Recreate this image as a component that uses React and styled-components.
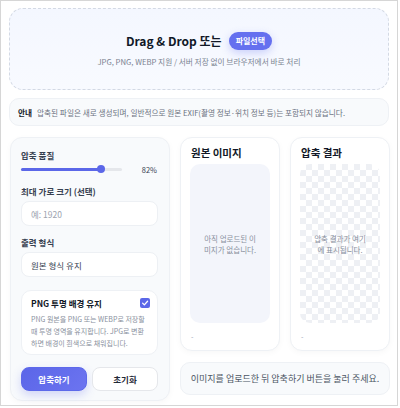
import styled, { createGlobalStyle } from "styled-components";

const GlobalStyle = createGlobalStyle`
  html, body {
    margin: 0;
    padding: 0;
    background: #ffffff;
  }
  * {
    box-sizing: border-box;
  }
  body {
    font-family: "Noto Sans CJK KR", "Noto Sans", sans-serif;
    color: #1f2937;
  }
`;

const Frame = styled.div`
  width: 398px;
  height: 406px;
  border: 1px solid #d6d6d6;
  padding: 7px 8px 0 8px;
  display: flex;
  flex-direction: column;
  gap: 8px;
  overflow: hidden;
`;

const DropZone = styled.div`
  height: 82px;
  border: 1.5px dashed #d3d9e4;
  border-radius: 14px;
  background: linear-gradient(180deg, #f4f7ff 0%, #f8faff 100%);
  display: flex;
  flex-direction: column;
  align-items: center;
  justify-content: center;
  gap: 7px;
`;

const DropTitle = styled.div`
  display: flex;
  align-items: center;
  gap: 7px;
  height: 18px;
  font-size: 12px;
  line-height: 18px;
  font-weight: 700;
  color: #111827;
`;

const PickButton = styled.span`
  background: #6570ef;
  color: #ffffff;
  font-size: 8px;
  font-weight: 700;
  height: 18px;
  padding: 0 7px;
  border-radius: 9px;
  display: inline-flex;
  align-items: center;
  box-shadow: 0 3px 8px rgba(101, 112, 239, 0.3);
`;

const DropSub = styled.div`
  font-size: 7.7px;
  line-height: 10px;
  color: #7a8291;
`;

const Notice = styled.div`
  height: 28px;
  border: 1px solid #eef1f5;
  background: #f8fafc;
  border-radius: 10px;
  display: flex;
  align-items: center;
  padding: 0 8px;
  font-size: 7.65px;
  color: #6b7280;
  gap: 5px;
  margin-bottom: 3px;
`;

const NoticeTag = styled.b`
  color: #111827;
  font-weight: 700;
`;

const Grid = styled.div`
  display: grid;
  grid-template-columns: 160px 100px 100px;
  grid-template-rows: 214px auto;
  column-gap: 10px;
  row-gap: 11px;
  padding-left: 1px;
`;

const ControlPanel = styled.div`
  grid-row: 1 / span 2;
  background: #f8fafc;
  border: 1px solid #eef1f5;
  border-radius: 12px;
  padding: 11px 11px 0 10px;
  display: flex;
  flex-direction: column;
  height: 264px;
  box-shadow: 0 2px 6px rgba(15, 23, 42, 0.03);
`;

const Label = styled.div`
  font-size: 8.5px;
  line-height: 12px;
  font-weight: 600;
  color: #374151;
  margin-top: ${(p) => p.$mt || 0}px;
`;

const SliderRow = styled.div`
  display: flex;
  align-items: center;
  justify-content: space-between;
  margin-top: 3px;
  height: 10px;
`;

const Track = styled.div`
  position: relative;
  width: 101px;
  height: 3px;
  border-radius: 2px;
  background: #e5e7eb;
`;

const Fill = styled.div`
  height: 100%;
  border-radius: 2px;
  background: #5b67e8;
`;

const Thumb = styled.div`
  position: absolute;
  top: 50%;
  width: 8px;
  height: 8px;
  border-radius: 50%;
  background: #5b67e8;
  transform: translate(-50%, -50%);
`;

const Percent = styled.span`
  font-size: 7.5px;
  color: #374151;
  padding-right: 1px;
`;

const Field = styled.div`
  margin-top: 4px;
  height: 25px;
  background: #ffffff;
  border: 1px solid #edf0f4;
  border-radius: 8px;
  display: flex;
  align-items: center;
  padding: 0 9px;
  font-size: 8.5px;
  color: ${(p) => (p.$placeholder ? "#9ca3af" : "#374151")};
`;

const PngBox = styled.div`
  margin-top: 13px;
  height: 65px;
  background: #ffffff;
  border: 1px solid #eef1f5;
  border-radius: 10px;
  padding: 6px 7px 0 9px;
`;

const PngHead = styled.div`
  display: flex;
  align-items: center;
  justify-content: space-between;
  height: 12px;
  font-size: 8.5px;
  font-weight: 700;
  color: #111827;
`;

const Check = styled.span`
  width: 10px;
  height: 10px;
  border-radius: 2px;
  background: #5b67e8;
  display: inline-flex;
  align-items: center;
  justify-content: center;
`;

const PngDesc = styled.div`
  margin-top: 4px;
  font-size: 7px;
  line-height: 12px;
  color: #8a919e;
`;

const ButtonRow = styled.div`
  margin-top: 12px;
  display: grid;
  grid-template-columns: 1fr 1fr;
  gap: 5px;
`;

const Button = styled.div`
  height: 24px;
  border-radius: 8px;
  display: flex;
  align-items: center;
  justify-content: center;
  font-size: 8.5px;
  font-weight: 700;
  color: ${(p) => (p.$primary ? "#ffffff" : "#1f2937")};
  background: ${(p) =>
    p.$primary ? "linear-gradient(135deg, #5b66e8, #6c74f0)" : "#ffffff"};
  border: 1px solid ${(p) => (p.$primary ? "#5d69ea" : "#e5e7eb")};
  box-shadow: ${(p) =>
    p.$primary ? "0 4px 10px rgba(93, 105, 234, 0.25)" : "none"};
`;

const PreviewCard = styled.div`
  background: #ffffff;
  border: 1px solid #eef1f5;
  border-radius: 12px;
  padding: 9px 9px 0 9px;
  display: flex;
  flex-direction: column;
  box-shadow: 0 2px 6px rgba(15, 23, 42, 0.03);
`;

const CardTitle = styled.div`
  font-size: 10.5px;
  font-weight: 700;
  color: #111827;
  height: 12px;
  line-height: 12px;
  padding-left: 1px;
`;

const Preview = styled.div`
  margin-top: 5px;
  height: 159px;
  border-radius: 10px;
  display: flex;
  align-items: center;
  justify-content: center;
  text-align: center;
  padding: 0 11px;
  font-size: 7.5px;
  line-height: 11px;
  color: #8a919e;
  background-color: #f3f5fb;
  ${(p) =>
    p.$checker &&
    `
    background-color: #ffffff;
    background-image:
      linear-gradient(45deg, #eef0f4 25%, transparent 25%),
      linear-gradient(-45deg, #eef0f4 25%, transparent 25%),
      linear-gradient(45deg, transparent 75%, #eef0f4 75%),
      linear-gradient(-45deg, transparent 75%, #eef0f4 75%);
    background-size: 12px 12px;
    background-position: 0 0, 0 6px, 6px -6px, -6px 0;
  `}
`;

const Meta = styled.div`
  margin-top: 7px;
  font-size: 7px;
  line-height: 12px;
  color: #9ca3af;
  padding-left: 1px;
`;

const Status = styled.div`
  grid-column: 2 / span 2;
  align-self: start;
  height: 33px;
  background: #f8fafc;
  border: 1px solid #eef1f5;
  border-radius: 10px;
  display: flex;
  align-items: center;
  justify-content: center;
  font-size: 9px;
  color: #4b5563;
`;

const App = () => {
  const quality = 82;
  const pos = ((101 - 8) * quality) / 100 + 4;
  return (
    <>
      <GlobalStyle />
      <Frame>
        <DropZone>
          <DropTitle>
            Drag &amp; Drop 또는
            <PickButton>파일선택</PickButton>
          </DropTitle>
          <DropSub>JPG, PNG, WEBP 지원 / 서버 저장 없이 브라우저에서 바로 처리</DropSub>
        </DropZone>

        <Notice>
          <NoticeTag>안내</NoticeTag>
          압축된 파일은 새로 생성되며, 일반적으로 원본 EXIF(촬영 정보·위치 정보 등)는 포함되지 않습니다.
        </Notice>

        <Grid>
          <ControlPanel>
            <Label>압축 품질</Label>
            <SliderRow>
              <Track>
                <Fill style={{ width: `${pos}px` }} />
                <Thumb style={{ left: `${pos}px` }} />
              </Track>
              <Percent>{quality}%</Percent>
            </SliderRow>
            <Label $mt={11}>최대 가로 크기 (선택)</Label>
            <Field $placeholder>예: 1920</Field>
            <Label $mt={10}>출력 형식</Label>
            <Field>원본 형식 유지</Field>
            <PngBox>
              <PngHead>
                PNG 투명 배경 유지
                <Check>
                  <svg width="8" height="8" viewBox="0 0 10 10">
                    <path
                      d="M2 5.2 L4.2 7.3 L8.2 2.8"
                      fill="none"
                      stroke="#ffffff"
                      strokeWidth="1.6"
                      strokeLinecap="round"
                      strokeLinejoin="round"
                    />
                  </svg>
                </Check>
              </PngHead>
              <PngDesc>
                PNG 원본을 PNG 또는 WEBP로 저장할 때 투명 영역을 유지합니다. JPG로 변환하면 배경이 흰색으로 채워집니다.
              </PngDesc>
            </PngBox>
            <ButtonRow>
              <Button $primary>압축하기</Button>
              <Button>초기화</Button>
            </ButtonRow>
          </ControlPanel>

          <PreviewCard>
            <CardTitle>원본 이미지</CardTitle>
            <Preview>아직 업로드된 이미지가 없습니다.</Preview>
            <Meta>-</Meta>
          </PreviewCard>

          <PreviewCard>
            <CardTitle>압축 결과</CardTitle>
            <Preview $checker>압축 결과가 여기에 표시됩니다.</Preview>
            <Meta>-</Meta>
          </PreviewCard>

          <Status>이미지를 업로드한 뒤 압축하기 버튼을 눌러 주세요.</Status>
        </Grid>
      </Frame>
    </>
  );
};

export default App;
